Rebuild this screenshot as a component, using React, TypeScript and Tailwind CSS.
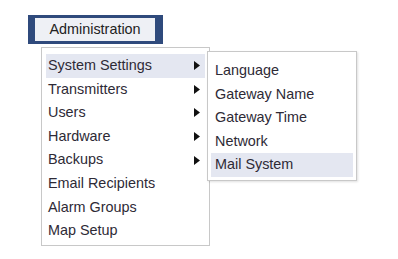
import React from 'react';

const mainItems = [
  { label: 'System Settings', sub: true },
  { label: 'Transmitters', sub: true },
  { label: 'Users', sub: true },
  { label: 'Hardware', sub: true },
  { label: 'Backups', sub: true },
  { label: 'Email Recipients', sub: false },
  { label: 'Alarm Groups', sub: false },
  { label: 'Map Setup', sub: false },
];

const subItems = ['Language', 'Gateway Name', 'Gateway Time', 'Network', 'Mail System'];

function Arrow() {
  return (
    <svg width="6" height="9" viewBox="0 0 6 9" className="mr-[5px]">
      <path d="M0 0 L6 4.5 L0 9 Z" fill="#111" />
    </svg>
  );
}

export default function App() {
  return (
    <div
      className="w-[398px] h-[259px] bg-white pl-[28px] pt-[15px] text-[14.4px] text-[#2e2a36]"
      style={{ fontFamily: 'Arial, "Liberation Sans", sans-serif' }}
    >
      {/* Top menu button */}
      <div className="w-[135px] h-[29px] bg-[#2f4a7c] pl-[7px] pr-[8px] py-[3px]">
        <div className="h-full bg-[#eef0f5] flex items-center justify-center text-[#222]">
          Administration
        </div>
      </div>

      {/* Dropdown */}
      <div className="relative ml-[13px] mt-[3px] w-[169px] bg-white border border-[#c8c8c8] pt-[6px] pb-[2px] px-[4px]">
        {mainItems.map((item, i) => (
          <div
            key={item.label}
            className={`h-[23.6px] flex items-center justify-between pl-[2px] ${i === 0 ? 'bg-[#e4e7f1]' : ''}`}
          >
            <span>{item.label}</span>
            {item.sub && <Arrow />}
          </div>
        ))}

        {/* Submenu */}
        <div className="absolute left-[165px] top-[3px] w-[150px] bg-white border border-[#c8c8c8] shadow-[1px_1px_2px_rgba(0,0,0,0.12)] pt-[7px] pb-[3px] px-[3px]">
          {subItems.map((s) => (
            <div
              key={s}
              className={`h-[23.6px] flex items-center pl-[4px] ${s === 'Mail System' ? 'bg-[#e4e7f1]' : ''}`}
            >
              {s}
            </div>
          ))}
        </div>
      </div>
    </div>
  );
}
